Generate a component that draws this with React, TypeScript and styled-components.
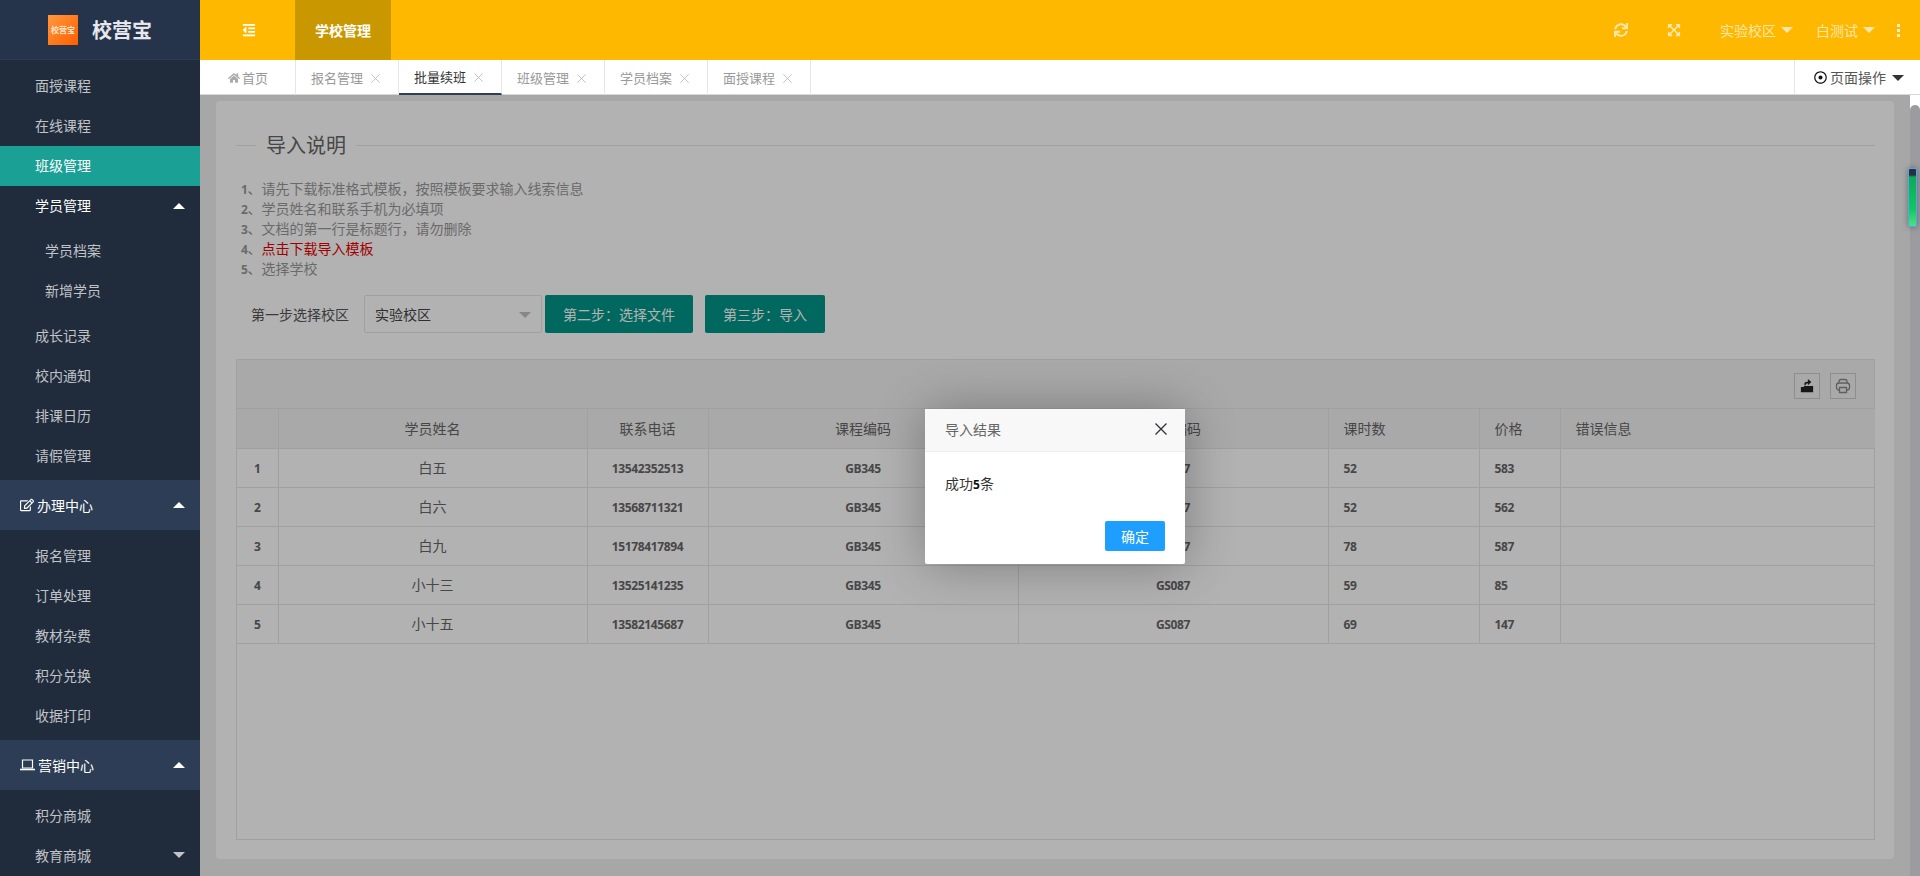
import React from "react";
import styled, { createGlobalStyle } from "styled-components";
import { FaHome, FaSync, FaExpandArrowsAlt, FaOutdent, FaRegDotCircle, FaRegEdit } from "react-icons/fa";

const Global = createGlobalStyle`
  html, body { margin: 0; padding: 0; height: 100%; overflow: hidden; }
  #root { height: 100%; }
  * { box-sizing: border-box; }
  body { font-family: "Noto Sans CJK SC", "Open Sans", sans-serif; font-size: 14px; color: #666; }
`;

const Shell = styled.div`
  display: flex;
  width: 1920px;
  height: 876px;
  overflow: hidden;
`;

const Sidebar = styled.aside`
  width: 200px;
  flex: none;
  background: #202b3c;
  overflow: hidden;
`;

const Brand = styled.div`
  height: 60px;
  background: #25344a;
  display: flex;
  align-items: center;
  padding-left: 48px;
  gap: 14px;
  border-bottom: 1px solid #2c3b52;
`;

const LogoMark = styled.div`
  width: 30px;
  height: 30px;
  background: linear-gradient(135deg, #ff9a3c, #ff5e00);
  color: #ffe6d0;
  font-size: 8px;
  font-weight: 700;
  line-height: 30px;
  text-align: center;
  white-space: nowrap;
`;

const BrandName = styled.div`
  font-size: 20px;
  font-weight: 700;
  color: #e6e8ee;
`;

const NavGroup = styled.div<{ $first?: boolean }>`
  padding: ${(p) => (p.$first ? "6px 0 4px" : "5px 0")};
  ${(p) => (p.$first ? "& > div, & > div > div { line-height: 38px; }" : "")}
`;

const NavItem = styled.div<{ $active?: boolean; $strong?: boolean; $sub?: boolean }>`
  position: relative;
  height: 40px;
  line-height: 40px;
  padding-left: ${(p) => (p.$sub ? 45 : 35)}px;
  background: ${(p) => (p.$active ? "#1aa094" : "transparent")};
  color: ${(p) => (p.$active || p.$strong ? "#fff" : "rgba(255,255,255,.72)")};
  font-size: 14px;
`;

const GroupHead = styled.div`
  position: relative;
  display: flex;
  align-items: center;
  height: 50px;
  padding-left: 20px;
  gap: 3px;
  background: #2d3d55;
  color: #fff;
  font-size: 14px;
`;

const Caret = styled.span<{ $up?: boolean; $color?: string; $size?: number }>`
  display: inline-block;
  width: 0;
  height: 0;
  border-left: ${(p) => p.$size ?? 6}px solid transparent;
  border-right: ${(p) => p.$size ?? 6}px solid transparent;
  ${(p) =>
    p.$up
      ? `border-bottom: ${p.$size ?? 6}px solid ${p.$color ?? "#fff"};`
      : `border-top: ${p.$size ?? 6}px solid ${p.$color ?? "#fff"};`}
`;

const SideCaret = styled(Caret)`
  position: absolute;
  right: 15px;
  top: 50%;
  margin-top: -3px;
`;

const Main = styled.div`
  flex: 1;
  min-width: 0;
  display: flex;
  flex-direction: column;
`;

const TopBar = styled.header`
  height: 60px;
  flex: none;
  background: #ffb800;
  display: flex;
  align-items: stretch;
`;

const MenuToggle = styled.div`
  width: 95px;
  padding-left: 2px;
  display: flex;
  align-items: center;
  justify-content: center;
  color: #fff;
  font-size: 14px;
`;

const TopNavActive = styled.div`
  width: 96px;
  background: #c99700;
  color: #fff;
  font-size: 14px;
  font-weight: 700;
  line-height: 60px;
  text-align: center;
`;

const TopRight = styled.div`
  margin-left: auto;
  display: flex;
  align-items: center;
  padding-right: 20px;
  color: rgba(255, 255, 255, 0.68);
  font-size: 14px;
`;

const TopIcon = styled.span<{ $mr: number }>`
  display: flex;
  margin-right: ${(p) => p.$mr}px;
  font-size: 14px;
`;

const TopMenu = styled.span<{ $mr: number }>`
  display: flex;
  align-items: center;
  gap: 5px;
  margin-right: ${(p) => p.$mr}px;
`;

const Dots = styled.span`
  display: flex;
  flex-direction: column;
  gap: 2px;
  & i {
    display: block;
    width: 3px;
    height: 3px;
    background: rgba(255, 255, 255, 0.8);
  }
`;

const TabBar = styled.nav`
  height: 35px;
  flex: none;
  background: #fff;
  border-bottom: 1px solid #d8d8d8;
  display: flex;
`;

const Tab = styled.div<{ $active?: boolean }>`
  position: relative;
  height: 35px;
  width: 103px;
  padding-left: 15px;
  display: flex;
  align-items: center;
  gap: 8px;
  font-size: 13px;
  color: ${(p) => (p.$active ? "#333" : "#999")};
  border-right: 1px solid #e6e6e6;
  ${(p) => (p.$active ? "border-bottom: 2px solid #2f4056;" : "")}
  & svg.close {
    margin-top: 2px;
  }
`;

const HomeTab = styled(Tab)`
  width: 96px;
  padding-left: 28px;
  gap: 2px;
`;

const TabOps = styled.div`
  margin-left: auto;
  width: 126px;
  height: 34px;
  border-left: 1px solid #e6e6e6;
  display: flex;
  align-items: center;
  padding-left: 19px;
  gap: 3px;
  color: #555;
  font-size: 14px;
  & svg {
    color: #111;
  }
`;

const OpsCaret = styled(Caret)`
  margin-left: 3px;
  margin-top: 2px;
`;

const ContentRow = styled.div`
  flex: 1;
  min-height: 0;
  display: flex;
  position: relative;
`;

const Page = styled.main`
  position: relative;
  flex: 1;
  min-width: 0;
  background: #f0f0f0;
  padding: 6px 16px 17px 16px;
  display: flex;
`;

const Card = styled.section`
  flex: 1;
  min-width: 0;
  background: #fff;
  border-radius: 4px;
  padding: 30px 19px 19px 20px;
  display: flex;
  flex-direction: column;
`;

const Field = styled.fieldset`
  margin: 0;
  padding: 0;
  border: 0;
  border-top: 1px solid #e6e6e6;
  min-width: 0;
`;

const Legend = styled.legend`
  margin-left: 20px;
  padding: 0 10px;
  font-size: 20px;
  line-height: 28px;
  color: #666;
`;

const Notes = styled.div`
  margin-top: 19px;
  padding-left: 5px;
  line-height: 20px;
  font-size: 14px;
  color: #999;
`;

const Note = styled.div`
  height: 20px;
  & a {
    color: #e80000;
    font-weight: 400;
  }
`;

const Num = styled.b`
  font-family: "Open Sans", sans-serif;
  font-weight: 700;
  font-size: 12px;
  letter-spacing: -0.35px;
`;

const StepRow = styled.div`
  margin-top: 17px;
  display: flex;
  align-items: center;
  height: 38px;
`;

const StepLabel = styled.label`
  width: 128px;
  padding-left: 15px;
  color: #555;
  font-size: 14px;
`;

const SelectBox = styled.div`
  position: relative;
  width: 178px;
  height: 38px;
  margin-right: 3px;
  padding-left: 10px;
  border: 1px solid #e6e6e6;
  border-radius: 2px;
  background: #fff;
  line-height: 36px;
  color: #444;
`;

const SelectArrow = styled(Caret)`
  position: absolute;
  right: 10px;
  top: 16px;
`;

const StepButton = styled.button`
  height: 38px;
  margin-right: 12px;
  padding: 0 18px;
  border: 0;
  border-radius: 2px;
  background: #009688;
  color: #fff;
  font: inherit;
  font-size: 14px;
  white-space: nowrap;
`;

const TableBox = styled.div`
  margin-top: 26px;
  flex: 1;
  min-height: 0;
  border: 1px solid #e6e6e6;
  background: #fff;
`;

const ToolBar = styled.div`
  height: 49px;
  background: #f2f2f2;
  display: flex;
  align-items: flex-start;
  justify-content: flex-end;
  gap: 10px;
  padding: 13px 18px 0 0;
  border-bottom: 1px solid #e6e6e6;
`;

const ToolBtn = styled.span<{ $color: string }>`
  width: 26px;
  height: 26px;
  border: 1px solid #ccc;
  display: flex;
  align-items: center;
  justify-content: center;
  color: ${(p) => p.$color};
`;

const Grid = styled.table`
  width: 100%;
  table-layout: fixed;
  border-collapse: collapse;
`;

const Col = styled.col<{ $w: number }>`
  width: ${(p) => p.$w}px;
`;

const Th = styled.th<{ $left?: boolean }>`
  height: 39px;
  padding: 0 15px;
  background: #f2f2f2;
  border: 1px solid #e6e6e6;
  border-top: 0;
  font-weight: 400;
  font-size: 14px;
  color: #666;
  text-align: ${(p) => (p.$left ? "left" : "center")};
  &:first-child { border-left: 0; }
  &:last-child { border-right: 0; }
`;

const Td = styled.td<{ $left?: boolean }>`
  height: 39px;
  padding: 0 15px 2px;
  border: 1px solid #e6e6e6;
  font-size: 14px;
  color: #666;
  text-align: ${(p) => (p.$left ? "left" : "center")};
  &:first-child { border-left: 0; text-align: left; padding-left: 17px; }
  &:last-child { border-right: 0; }
`;

const Shade = styled.div`
  position: absolute;
  inset: 0;
  background: rgba(0, 0, 0, 0.3);
  display: flex;
  align-items: center;
  justify-content: center;
  padding-top: 1px;
`;

const Dialog = styled.div`
  width: 260px;
  height: 155px;
  background: #fff;
  border-radius: 2px;
  box-shadow: 1px 1px 50px rgba(0, 0, 0, 0.3);
  display: flex;
  flex-direction: column;
`;

const DialogTitle = styled.div`
  height: 43px;
  flex: none;
  padding: 0 18px 2px 20px;
  background: #f8f8f8;
  border-bottom: 1px solid #eee;
  display: flex;
  align-items: center;
  justify-content: space-between;
  color: #666;
  font-size: 14px;
`;

const DialogBody = styled.div`
  flex: 1;
  padding: 19px 20px 0;
  line-height: 24px;
  font-size: 14px;
  color: #333;
`;

const DialogNum = styled.b`
  font-family: "Open Sans", sans-serif;
  font-weight: 700;
  font-size: 12px;
  color: #111;
`;

const DialogFoot = styled.div`
  display: flex;
  justify-content: flex-end;
  padding: 0 20px 13px;
`;

const OkButton = styled.button`
  width: 60px;
  height: 30px;
  padding: 0;
  border: 0;
  border-radius: 2px;
  background: #1e9fff;
  color: #fff;
  font: inherit;
  font-size: 14px;
`;

const ScrollTrack = styled.div`
  position: relative;
  width: 10px;
  flex: none;
  background: #fff;
  padding-top: 10px;
`;

const ScrollThumb = styled.div`
  height: 100%;
  background: #9c9ca0;
  border-radius: 5px 5px 0 0;
`;

const Grip = styled.div`
  position: absolute;
  left: -2px;
  top: 73px;
  width: 9px;
  height: 59px;
  border: 1px solid #4aa8f5;
  border-radius: 2px;
  background: linear-gradient(#2b2f3d 0 6px, #0ea957 8px, #12c662 70%, #4fe07c);
  box-shadow: 0 0 6px rgba(0, 0, 0, 0.35);
`;

const Cross = ({ size, color, width, className }: { size: number; color: string; width: number; className?: string }) => (
  <svg className={className} width={size} height={size} viewBox="0 0 12 12" fill="none" stroke={color} strokeWidth={width}>
    <path d="M.5.5l11 11M11.5.5l-11 11" />
  </svg>
);

const Laptop = () => (
  <svg width="15" height="12" viewBox="0 0 15 12" fill="none" stroke="#fff" strokeWidth="1.2">
    <path d="M2.5 1h10v8h-10z" />
    <path d="M0 10.5h15" strokeWidth="1.6" />
  </svg>
);

const ExportIcon = () => (
  <svg width="14" height="14" viewBox="0 0 16 16" fill="currentColor">
    <path d="M1 9h3l1-1h10v7H1z" />
    <path d="M5 7V5.5C5 4 6 3 8 3h1V0l4 3.5L9 7V5H8C7 5 6.5 5.6 6.5 7z" />
  </svg>
);

const PrintIcon = () => (
  <svg width="16" height="16" viewBox="0 0 16 16" fill="none" stroke="currentColor" strokeWidth="1.3">
    <path d="M4 5V3.5Q4 1.5 6 1.5h4Q12 1.5 12 3.5V5" />
    <rect x="1.5" y="5" width="13" height="7" rx="2.5" />
    <path d="M4.5 9.5h7v5h-7z" fill="#f2f2f2" />
  </svg>
);

const Side = ({ label, active, strong, sub }: { label: string; active?: boolean; strong?: boolean; sub?: boolean }) => (
  <NavItem $active={active} $strong={strong} $sub={sub}>
    {label}
  </NavItem>
);

const cols = [41, 309, 121, 310, 310, 151, 81, 315];
const rows = [
  ["白五", "13542352513", "GB345", "GS087", "52", "583"],
  ["白六", "13568711321", "GB345", "GS087", "52", "562"],
  ["白九", "15178417894", "GB345", "GS087", "78", "587"],
  ["小十三", "13525141235", "GB345", "GS087", "59", "85"],
  ["小十五", "13582145687", "GB345", "GS087", "69", "147"],
];

export default function App() {
  return (
    <Shell>
      <Global />
      <Sidebar>
        <Brand>
          <LogoMark>校营宝</LogoMark>
          <BrandName>校营宝</BrandName>
        </Brand>
        <NavGroup $first>
          <Side label="面授课程" />
          <Side label="在线课程" />
          <Side label="班级管理" active />
          <NavItem $strong>
            学员管理
            <SideCaret $up />
          </NavItem>
          <NavGroup>
            <Side label="学员档案" sub />
            <Side label="新增学员" sub />
          </NavGroup>
          <Side label="成长记录" />
          <Side label="校内通知" />
          <Side label="排课日历" />
          <Side label="请假管理" />
        </NavGroup>
        <GroupHead>
          <FaRegEdit size={14} />
          办理中心
          <SideCaret $up />
        </GroupHead>
        <NavGroup>
          <Side label="报名管理" />
          <Side label="订单处理" />
          <Side label="教材杂费" />
          <Side label="积分兑换" />
          <Side label="收据打印" />
        </NavGroup>
        <GroupHead>
          <Laptop />
          营销中心
          <SideCaret $up />
        </GroupHead>
        <NavGroup>
          <Side label="积分商城" />
          <NavItem>
            教育商城
            <SideCaret $color="rgba(255,255,255,.72)" />
          </NavItem>
        </NavGroup>
      </Sidebar>
      <Main>
        <TopBar>
          <MenuToggle>
            <FaOutdent size={14} />
          </MenuToggle>
          <TopNavActive>学校管理</TopNavActive>
          <TopRight>
            <TopIcon $mr={39}>
              <FaSync />
            </TopIcon>
            <TopIcon $mr={39}>
              <FaExpandArrowsAlt />
            </TopIcon>
            <TopMenu $mr={23}>
              实验校区
              <Caret $color="rgba(255,255,255,.68)" />
            </TopMenu>
            <TopMenu $mr={22}>
              白测试
              <Caret $color="rgba(255,255,255,.68)" />
            </TopMenu>
            <Dots>
              <i />
              <i />
              <i />
            </Dots>
          </TopRight>
        </TopBar>
        <TabBar>
          <HomeTab>
            <FaHome size={12} color="#aaa" />
            首页
          </HomeTab>
          <Tab>
            报名管理
            <Cross className="close" size={9} color="#b5b5b5" width={1.1} />
          </Tab>
          <Tab $active>
            批量续班
            <Cross className="close" size={9} color="#b5b5b5" width={1.1} />
          </Tab>
          <Tab>
            班级管理
            <Cross className="close" size={9} color="#b5b5b5" width={1.1} />
          </Tab>
          <Tab>
            学员档案
            <Cross className="close" size={9} color="#b5b5b5" width={1.1} />
          </Tab>
          <Tab>
            面授课程
            <Cross className="close" size={9} color="#b5b5b5" width={1.1} />
          </Tab>
          <TabOps>
            <FaRegDotCircle size={13} />
            页面操作
            <OpsCaret $color="#333" />
          </TabOps>
        </TabBar>
        <ContentRow>
          <Page>
            <Card>
              <Field>
                <Legend>导入说明</Legend>
                <Notes>
                  <Note><Num>1</Num>、请先下载标准格式模板，按照模板要求输入线索信息</Note>
                  <Note><Num>2</Num>、学员姓名和联系手机为必填项</Note>
                  <Note><Num>3</Num>、文档的第一行是标题行，请勿删除</Note>
                  <Note><Num>4</Num>、<a>点击下载导入模板</a></Note>
                  <Note><Num>5</Num>、选择学校</Note>
                </Notes>
              </Field>
              <StepRow>
                <StepLabel>第一步选择校区</StepLabel>
                <SelectBox>
                  实验校区
                  <SelectArrow $color="#c2c2c2" />
                </SelectBox>
                <StepButton>第二步：选择文件</StepButton>
                <StepButton>第三步：导入</StepButton>
              </StepRow>
              <TableBox>
                <ToolBar>
                  <ToolBtn $color="#222"><ExportIcon /></ToolBtn>
                  <ToolBtn $color="#888"><PrintIcon /></ToolBtn>
                </ToolBar>
                <Grid>
                  <colgroup>
                    {cols.map((w, i) => (
                      <Col key={i} $w={w} />
                    ))}
                  </colgroup>
                  <thead>
                    <tr>
                      <Th />
                      <Th>学员姓名</Th>
                      <Th>联系电话</Th>
                      <Th>课程编码</Th>
                      <Th>班级编码</Th>
                      <Th $left>课时数</Th>
                      <Th $left>价格</Th>
                      <Th $left>错误信息</Th>
                    </tr>
                  </thead>
                  <tbody>
                    {rows.map((r, i) => (
                      <tr key={i}>
                        <Td><Num>{i + 1}</Num></Td>
                        <Td>{r[0]}</Td>
                        <Td><Num>{r[1]}</Num></Td>
                        <Td><Num>{r[2]}</Num></Td>
                        <Td><Num>{r[3]}</Num></Td>
                        <Td $left><Num>{r[4]}</Num></Td>
                        <Td $left><Num>{r[5]}</Num></Td>
                        <Td $left />
                      </tr>
                    ))}
                  </tbody>
                </Grid>
              </TableBox>
            </Card>
            <Shade>
              <Dialog>
                <DialogTitle>
                  导入结果
                  <Cross size={12} color="#2f2f3a" width={1.3} />
                </DialogTitle>
                <DialogBody>
                  成功<DialogNum>5</DialogNum>条
                </DialogBody>
                <DialogFoot>
                  <OkButton>确定</OkButton>
                </DialogFoot>
              </Dialog>
            </Shade>
          </Page>
          <ScrollTrack>
            <ScrollThumb />
            <Grip />
          </ScrollTrack>
        </ContentRow>
      </Main>
    </Shell>
  );
}
